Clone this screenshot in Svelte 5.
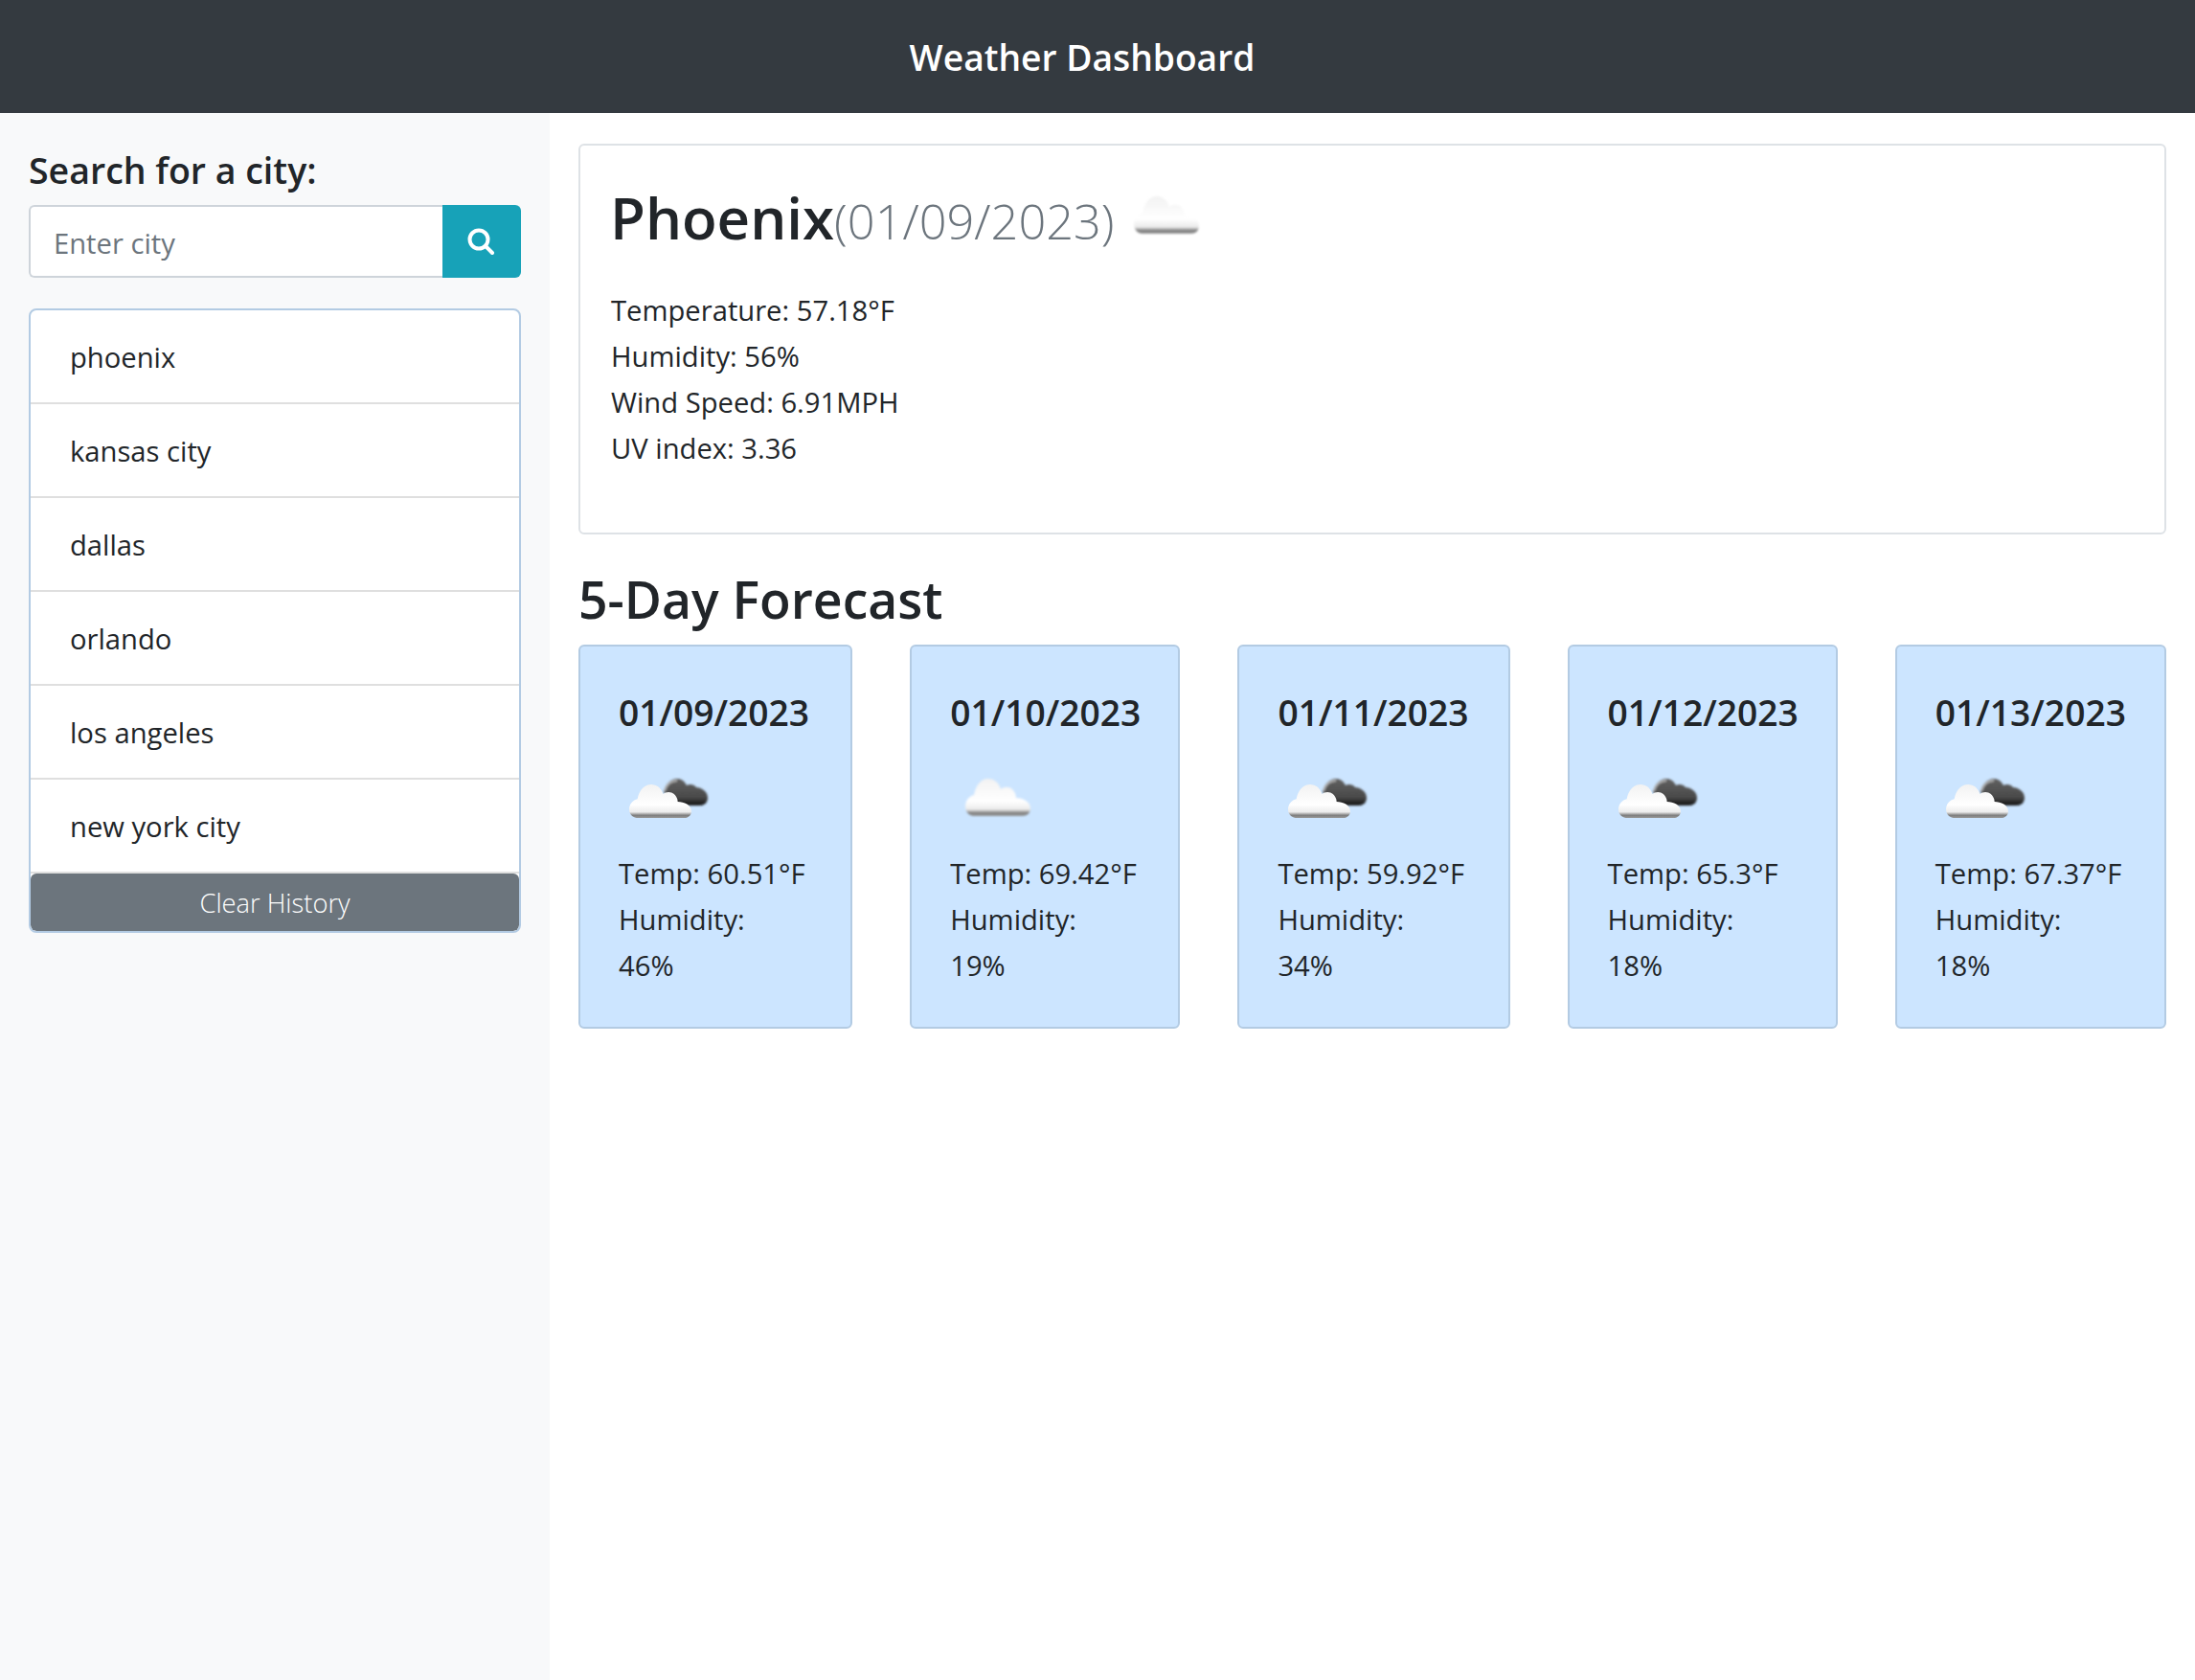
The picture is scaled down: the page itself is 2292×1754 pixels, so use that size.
<script>
  const cities = ['phoenix', 'kansas city', 'dallas', 'orlando', 'los angeles', 'new york city'];
  const forecast = [
    { date: '01/09/2023', temp: '60.51', humidity: '46', icon: 'broken' },
    { date: '01/10/2023', temp: '69.42', humidity: '19', icon: 'few' },
    { date: '01/11/2023', temp: '59.92', humidity: '34', icon: 'broken' },
    { date: '01/12/2023', temp: '65.3', humidity: '18', icon: 'broken' },
    { date: '01/13/2023', temp: '67.37', humidity: '18', icon: 'broken' }
  ];
  const cloudPath = 'M8 39C3 38 0 34 0 29C0 23 4 18 9 17C11 6 17 0 24 0C30 0 35 4 37 11C40 8 46 8 49 11C51 13 53 16 53 20C60 20 68 24 68 31C68 36 64 39 60 39Z';
</script>

<svg class="defs" width="0" height="0" aria-hidden="true">
  <defs>
    <linearGradient id="white" x1="0" y1="0" x2="0" y2="1">
      <stop offset="0" stop-color="#f2f2f2" />
      <stop offset="0.6" stop-color="#ffffff" />
      <stop offset="0.82" stop-color="#ececec" />
      <stop offset="0.92" stop-color="#7c7c7c" />
      <stop offset="1" stop-color="#9c9c9c" />
    </linearGradient>
    <linearGradient id="dark" x1="0" y1="0" x2="0" y2="1">
      <stop offset="0" stop-color="#606060" />
      <stop offset="0.7" stop-color="#4a4a4a" />
      <stop offset="1" stop-color="#111111" />
    </linearGradient>
    <filter id="soft" x="-10%" y="-10%" width="120%" height="120%">
      <feGaussianBlur stdDeviation="0.8" />
    </filter>
  </defs>
</svg>

<div class="page">
  <header class="topbar">Weather Dashboard</header>
  <div class="layout">
    <aside class="sidebar">
      <h3 class="search-title">Search for a city:</h3>
      <form class="search" onsubmit={(e) => e.preventDefault()}>
        <input type="text" placeholder="Enter city" />
        <button type="submit" aria-label="Search">
          <svg width="30" height="30" viewBox="0 0 30 30" fill="none" stroke="#fff" stroke-width="4">
            <circle cx="13" cy="13" r="9.500" />
            <line x1="20" y1="20" x2="27" y2="27" stroke-linecap="round" />
          </svg>
        </button>
      </form>
      <div class="history">
        {#each cities as city}
          <div class="history-item">{city}</div>
        {/each}
        <button class="clear" type="button">Clear History</button>
      </div>
    </aside>

    <main class="content">
      <section class="today">
        <h2 class="today-title">
          <span class="city">Phoenix</span><span class="today-date">(01/09/2023)</span>
          <svg class="today-icon" width="68" height="39" viewBox="0 0 68 39" overflow="visible">
            <path d={cloudPath} fill="url(#white)" filter="url(#soft)" />
          </svg>
        </h2>
        <p>Temperature: 57.18°F</p>
        <p>Humidity: 56%</p>
        <p>Wind Speed: 6.91MPH</p>
        <p>UV index: 3.36</p>
      </section>

      <h2 class="forecast-title">5-Day Forecast</h2>
      <div class="forecast">
        {#each forecast as day}
          <article class="day">
            <h4>{day.date}</h4>
            <div class="day-icon" class:few={day.icon === 'few'}>
              {#if day.icon === 'few'}
                <svg width="68" height="39" viewBox="0 0 68 39" overflow="visible">
                  <path d={cloudPath} fill="url(#white)" filter="url(#soft)" />
                </svg>
              {:else}
                <svg width="82" height="41" viewBox="0 0 82 41" overflow="visible">
                  <g filter="url(#soft)">
                    <path d="M36 14C38 5 44 0 50 0C55 0 58 3 60 7C63 5 68 6 70 9C75 9 82 13 82 20C82 25 78 28 74 28L50 28Z" fill="url(#dark)" />
                    <path d="M37 13C39 6 44 2 50 2" fill="none" stroke="#b0b0b0" stroke-width="2" />
                  </g>
                  <g transform="translate(0 6) scale(0.956 0.9)">
                    <path d={cloudPath} fill="url(#white)" filter="url(#soft)" />
                  </g>
                </svg>
              {/if}
            </div>
            <p>Temp: {day.temp}°F</p>
            <p>Humidity:<br />{day.humidity}%</p>
          </article>
        {/each}
      </div>
    </main>
  </div>
</div>

<style>
  :global(body) {
    margin: 0;
    background: #fff;
    color: #212529;
    font-family: "Open Sans", sans-serif;
    font-size: 29.2px;
  }

  .defs {
    position: absolute;
  }

  .page {
    height: 1754px;
    display: flex;
    flex-direction: column;
  }

  .topbar {
    height: 118px;
    box-sizing: border-box;
    padding-right: 32px;
    display: flex;
    align-items: center;
    justify-content: center;
    background: #343a40;
    color: #fff;
    font-size: 37.2px;
    font-weight: 600;
  }

  .layout {
    flex: 1;
    display: flex;
  }

  .sidebar {
    width: 574px;
    box-sizing: border-box;
    padding: 36px 30px 0;
    background: #f8f9fa;
  }

  .search-title {
    margin: 0 0 12px;
    font-size: 37.5px;
    line-height: 48px;
    font-weight: 600;
  }

  .search {
    display: flex;
    height: 76px;
    margin-bottom: 32px;
  }

  .search input {
    flex: 1;
    min-width: 0;
    box-sizing: border-box;
    padding: 4px 24px 0;
    border: 2px solid #ced4da;
    border-right: 0;
    border-radius: 6px 0 0 6px;
    background: #fff;
    font: inherit;
  }

  .search input::placeholder {
    color: #6c757d;
    opacity: 1;
  }

  .search button {
    width: 82px;
    display: flex;
    align-items: center;
    justify-content: center;
    padding: 0 2px 0 0;
    border: 0;
    border-radius: 0 6px 6px 0;
    background: #17a2b8;
  }

  .history {
    border: 2px solid #b3cbe3;
    border-radius: 8px;
    background: #fff;
    overflow: hidden;
  }

  .history-item {
    height: 98px;
    box-sizing: border-box;
    padding: 2px 41px 0;
    display: flex;
    align-items: center;
    border-bottom: 2px solid #dfdfdf;
  }

  .clear {
    display: block;
    width: 100%;
    height: 60px;
    padding: 0;
    border: 0;
    border-radius: 6px;
    background: #6c757d;
    color: #fff;
    font: inherit;
    font-size: 27.3px;
    font-weight: 300;
  }

  .content {
    flex: 1;
    min-width: 0;
    padding: 32px 30px 0;
  }

  .today {
    height: 408px;
    box-sizing: border-box;
    padding: 32px 32px 0;
    border: 2px solid #dee2e6;
    border-radius: 6px;
  }

  .today p,
  .day p {
    margin: 0;
    line-height: 48px;
  }

  .today-title {
    display: flex;
    align-items: center;
    margin: 3px 0 33px -1px;
    height: 80px;
    font-size: 60px;
    font-weight: 600;
  }

  .today-date {
    margin-top: 6px;
    color: #6c757d;
    font-size: 50.5px;
    font-weight: 300;
  }

  .today-icon {
    margin: -6px 0 0 20px;
  }

  .forecast-title {
    margin: 32px 0 11px;
    height: 72px;
    line-height: 72px;
    font-size: 53.5px;
    font-weight: 600;
  }

  .forecast {
    display: grid;
    grid-template-columns: 286fr 282fr 284fr 282fr 283fr;
    gap: 60px;
  }

  .day {
    height: 401px;
    box-sizing: border-box;
    padding: 47px 30px 0 40px;
    border: 2px solid #b3cbe3;
    border-radius: 6px;
    background: #cce5ff;
  }

  .day h4 {
    margin: 0;
    height: 44px;
    line-height: 44px;
    font-size: 37.2px;
    font-weight: 600;
    white-space: nowrap;
  }

  .day-icon {
    height: 122px;
    box-sizing: border-box;
    padding: 47px 0 0 11px;
  }

  .day-icon.few {
    padding: 47px 0 0 16px;
  }

  .day-icon svg {
    display: block;
  }
</style>
